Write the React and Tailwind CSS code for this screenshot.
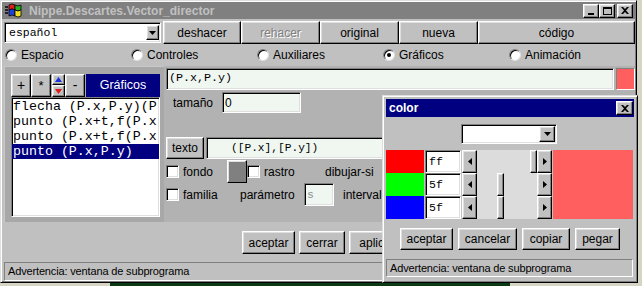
import React from 'react';

// Win95-style bevels
const raised =
  'border border-t-white border-l-white border-r-black border-b-black shadow-[inset_-1px_-1px_0_#808080,inset_1px_1px_0_#dfdfdf]';
const sunken =
  'border border-t-[#808080] border-l-[#808080] border-r-white border-b-white shadow-[inset_1px_1px_0_#000,inset_-1px_-1px_0_#dfdfdf]';
const thinSunken = 'border border-t-[#808080] border-l-[#808080] border-r-white border-b-white';

const mono = "font-['Liberation_Mono','Courier_New',monospace]";

const Button = ({ children, className = '', disabled }) => (
  <div
    className={`${raised} bg-[#c0c0c0] flex items-center justify-center text-[12px] ${
      disabled ? 'text-[#808080] [text-shadow:1px_1px_0_#fff]' : 'text-black'
    } ${className}`}
  >
    {children}
  </div>
);

const Radio = ({ label, checked }) => (
  <div className="flex items-center gap-[4px]">
    <span className="w-[12px] h-[12px] rounded-full bg-white border border-t-[#808080] border-l-[#808080] border-r-[#dfdfdf] border-b-[#dfdfdf] shadow-[inset_1px_1px_0_#000] flex items-center justify-center">
      {checked && <span className="w-[4px] h-[4px] rounded-full bg-black" />}
    </span>
    <span>{label}</span>
  </div>
);

const Check = () => <span className={`w-[13px] h-[13px] bg-white shrink-0 ${sunken}`} />;

const TitleBtn = ({ children, className = '' }) => (
  <div className={`${raised} bg-[#c0c0c0] w-[16px] h-[14px] flex items-center justify-center ${className}`}>
    {children}
  </div>
);

const CloseGlyph = () => (
  <svg width="8" height="7" viewBox="0 0 8 7">
    <path d="M0 0h2l2 2 2-2h2L5 3.5 8 7H6L4 5 2 7H0l3-3.5z" fill="#000" />
  </svg>
);

const Arrow = ({ dir }) => (
  <div className={`${raised} bg-[#c0c0c0] w-[15px] h-full flex items-center justify-center shrink-0`}>
    <svg width="4" height="7" viewBox="0 0 4 7">
      {dir === 'left' ? <path d="M4 0v7L0 3.5z" fill="#000" /> : <path d="M0 0v7l4-3.5z" fill="#000" />}
    </svg>
  </div>
);

const Scroll = ({ value }) => {
  // track is 60px wide, thumb 7px
  const left = Math.round((value / 255) * 53);
  return (
    <div className="flex h-full w-[90px] ml-[1px]">
      <Arrow dir="left" />
      <div className="relative flex-1 bg-[#dcdcdc]">
        <div className={`absolute top-0 bottom-0 w-[7px] ${raised} bg-[#c0c0c0]`} style={{ left }} />
      </div>
      <Arrow dir="right" />
    </div>
  );
};

const DownBtn = ({ className = '' }) => (
  <div className={`${raised} bg-[#c0c0c0] flex items-center justify-center ${className}`}>
    <svg width="7" height="4" viewBox="0 0 7 4">
      <path d="M0 0h7L3.5 4z" fill="#000" />
    </svg>
  </div>
);

const AppIcon = () => (
  <svg width="17" height="15" viewBox="0 0 17 15">
    <path d="M0 4h3M0 7h3M0 10h3" stroke="#000" strokeWidth="1.5" />
    <path d="M4 2q3-2 6 0v5q-3-2-6 0z" fill="#e02020" stroke="#000" strokeWidth="0.8" />
    <path d="M10 2q3 2 6 0v5q-3 2-6 0z" fill="#20b020" stroke="#000" strokeWidth="0.8" />
    <path d="M4 7q3-2 6 0v6q-3-2-6 0z" fill="#2040e0" stroke="#000" strokeWidth="0.8" />
    <path d="M10 7q3 2 6 0v6q-3 2-6 0z" fill="#f0e020" stroke="#000" strokeWidth="0.8" />
  </svg>
);

const items = ['flecha (P.x,P.y)(P', 'punto (P.x+t,f(P.x', 'punto (P.x+t,f(P.x', 'punto (P.x,P.y)'];

const rows = [
  { swatch: 'bg-[#ff0000]', hex: 'ff', value: 255 },
  { swatch: 'bg-[#00ff00]', hex: '5f', value: 95 },
  { swatch: 'bg-[#0000ff]', hex: '5f', value: 95 },
];

export default function App() {
  return (
    <div className="relative w-[642px] h-[286px] overflow-hidden bg-[#d6d4c4] font-['Liberation_Sans',Arial,sans-serif] text-[12px] text-black">
      {/* Main window */}
      <div className="w-[637px] h-[283px] flex flex-col bg-[#c0c0c0] border border-t-[#dfdfdf] border-l-[#dfdfdf] border-r-black border-b-black shadow-[inset_1px_1px_0_#fff,inset_-1px_-1px_0_#808080] p-[1px]">
        {/* Title bar (inactive) */}
        <div className="h-[17px] bg-[#808080] flex items-center shrink-0">
          <div className="ml-[3px]">
            <AppIcon />
          </div>
          <span className="ml-[7px] font-bold text-[12px] text-[#c0c0c0]">Nippe.Descartes.Vector_director</span>
          <div className="ml-auto flex items-center mr-[2px]">
            <TitleBtn>
              <span className="w-[6px] h-[2px] bg-black mt-[6px] -ml-[1px]" />
            </TitleBtn>
            <TitleBtn>
              <span className="w-[9px] h-[8px] border border-black border-t-2" />
            </TitleBtn>
            <TitleBtn className="ml-[2px]">
              <CloseGlyph />
            </TitleBtn>
          </div>
        </div>

        {/* Toolbar */}
        <div className="mt-[2px] h-[23px] flex shrink-0">
          <div className={`ml-[2px] mr-[2px] w-[157px] h-[21px] self-center bg-white flex items-center ${sunken}`}>
            <span className={`${mono} text-[11.5px] pl-[4px]`}>español</span>
            <DownBtn className="ml-auto mr-[1px] w-[13px] h-[15px]" />
          </div>
          <Button className="w-[78px]">deshacer</Button>
          <Button className="w-[79px]" disabled>
            rehacer
          </Button>
          <Button className="w-[79px]">original</Button>
          <Button className="w-[79px]">nueva</Button>
          <Button className="flex-1">código</Button>
        </div>

        {/* Section radios */}
        <div className="h-[22px] grid grid-cols-5 pl-[3px] items-center shrink-0">
          <Radio label="Espacio" />
          <Radio label="Controles" />
          <Radio label="Auxiliares" />
          <Radio label="Gráficos" checked />
          <Radio label="Animación" />
        </div>

        {/* Editor panel */}
        <div className="h-[156px] ml-[2px] flex bg-[#b2b2b2] shrink-0">
          {/* List frame */}
          <div className="w-[160px] bg-[#a8a8a8] pt-[7px] pl-[6px] pr-[4px] border-t border-l border-[#c8c8c8]">
            <div className="h-[23px] flex">
              <Button className="w-[20px] text-[14px]">+</Button>
              <Button className="w-[20px] text-[13px]">*</Button>
              <div className="w-[13px] ml-[1px] flex flex-col">
                <div className={`${raised} bg-[#c0c0c0] h-[11px] flex items-center justify-center`}>
                  <svg width="7" height="5" viewBox="0 0 7 5">
                    <path d="M3.5 0L7 5H0z" fill="#1830e0" />
                  </svg>
                </div>
                <div className={`${raised} bg-[#c0c0c0] h-[12px] flex items-center justify-center`}>
                  <svg width="7" height="5" viewBox="0 0 7 5">
                    <path d="M0 0h7L3.5 5z" fill="#e01818" />
                  </svg>
                </div>
              </div>
              <Button className="w-[20px] text-[14px]">-</Button>
              <div className="flex-1 ml-[1px] bg-[#000080] text-white text-[12.5px] flex items-center justify-center">
                Gráficos
              </div>
            </div>
            <div className={`h-[120px] bg-white py-[1px] ${sunken}`}>
              {items.map((t, i) => (
                <div
                  key={i}
                  className={`${mono} text-[13.3px] leading-[15px] pl-[1px] whitespace-nowrap overflow-hidden ${
                    i === 3 ? 'bg-[#000080] text-white' : ''
                  }`}
                >
                  {t}
                </div>
              ))}
            </div>
          </div>

          {/* Properties */}
          <div className="flex-1 flex flex-col pl-[2px]">
            <div className="mt-[2px] h-[22px] flex gap-[2px]">
              <div className={`flex-1 bg-[#f0f7f0] flex items-center ${sunken}`}>
                <span className={`${mono} text-[11.7px] pl-[2px]`}>(P.x,P.y)</span>
              </div>
              <div className={`w-[19px] bg-[#ff5f5f] ${thinSunken}`} />
            </div>

            <div className="mt-[2px] h-[21px] flex items-center">
              <span className="pl-[7px] w-[56px]">tamaño</span>
              <div className={`w-[79px] h-full bg-[#f0f7f0] flex items-center ${sunken}`}>
                <span className="pl-[2px]">0</span>
              </div>
            </div>

            <div className="mt-[24px] h-[22px] flex">
              <Button className="w-[38px]">texto</Button>
              <div className={`ml-[2px] flex-1 bg-[#f0f7f0] flex items-center ${sunken}`}>
                <span className={`${mono} text-[11.2px] pl-[24px]`}>([P.x],[P.y])</span>
              </div>
            </div>

            <div className="mt-[1px] h-[23px] flex items-center">
              <Check />
              <span className="ml-[4px] w-[44px]">fondo</span>
              <div className={`w-[20px] h-full bg-[#808080] ${raised}`} />
              <Check />
              <span className="ml-[4px] w-[61px]">rastro</span>
              <span>dibujar-si</span>
            </div>

            <div className="h-[23px] flex items-center">
              <Check />
              <span className="ml-[4px] w-[57px]">familia</span>
              <span className="w-[64px]">parámetro</span>
              <div className={`w-[30px] h-full bg-[#f0f7f0] flex items-center ${sunken}`}>
                <span className={`${mono} text-[11.5px] pl-[2px] text-[#909090]`}>s</span>
              </div>
              <span className="ml-[9px]">intervalo</span>
            </div>
          </div>
        </div>

        {/* Action buttons */}
        <div className="mt-[9px] h-[23px] flex gap-[4px] pl-[240px] shrink-0">
          <Button className="w-[53px]">aceptar</Button>
          <Button className="w-[46px]">cerrar</Button>
          <Button className="w-[56px]">aplicar</Button>
        </div>

        {/* Status */}
        <div className={`mt-[8px] mx-[2px] h-[19px] flex items-center pl-[3px] ${thinSunken}`}>
          <span className="text-[11px] tracking-[-0.15px]">Advertencia: ventana de subprograma</span>
        </div>
      </div>

      {/* Desktop strip */}
      <div className="h-[3px] flex">
        <div className="w-[110px]" />
        <div className="w-[400px] bg-[#0c3a14]" />
      </div>

      {/* Color dialog window */}
      <div className="absolute left-[382px] top-[95px] w-[256px] h-[188px] flex flex-col bg-[#c0c0c0] border border-t-[#dfdfdf] border-l-[#dfdfdf] border-r-black border-b-black shadow-[inset_1px_1px_0_#fff,inset_-1px_-1px_0_#808080] p-[3px]">
        <div className="h-[18px] bg-[#000080] flex items-center shrink-0">
          <span className="pl-[3px] font-bold text-white text-[12px]">color</span>
          <TitleBtn className="ml-auto mr-[1px] w-[17px]">
            <CloseGlyph />
          </TitleBtn>
        </div>

        <div className={`mt-[7px] ml-[75px] w-[96px] h-[20px] bg-white flex items-center shrink-0 ${sunken}`}>
          <DownBtn className="ml-auto mr-[1px] w-[16px] h-[16px]" />
        </div>

        <div className="mt-[6px] flex shrink-0">
          <div className="flex flex-col">
            {rows.map((r, i) => (
              <div key={i} className="h-[23px] flex">
                <div className={`w-[38px] h-full ${r.swatch}`} />
                <div className={`ml-[1px] w-[36px] h-full bg-white flex items-center ${sunken}`}>
                  <span className={`${mono} text-[11.5px] pl-[3px]`}>{r.hex}</span>
                </div>
                <Scroll value={r.value} />
              </div>
            ))}
          </div>
          <div className="ml-[1px] w-[80px] h-[69px] bg-[#ff5f5f]" />
        </div>

        <div className="mt-[9px] h-[22px] flex justify-center gap-[5px] shrink-0">
          <Button className="w-[53px]">aceptar</Button>
          <Button className="w-[59px]">cancelar</Button>
          <Button className="w-[48px]">copiar</Button>
          <Button className="w-[45px]">pegar</Button>
        </div>

        <div className={`mt-[9px] h-[18px] w-[247px] flex items-center pl-[3px] shrink-0 ${thinSunken}`}>
          <span className="text-[11px] tracking-[-0.15px]">Advertencia: ventana de subprograma</span>
        </div>
      </div>
    </div>
  );
}
